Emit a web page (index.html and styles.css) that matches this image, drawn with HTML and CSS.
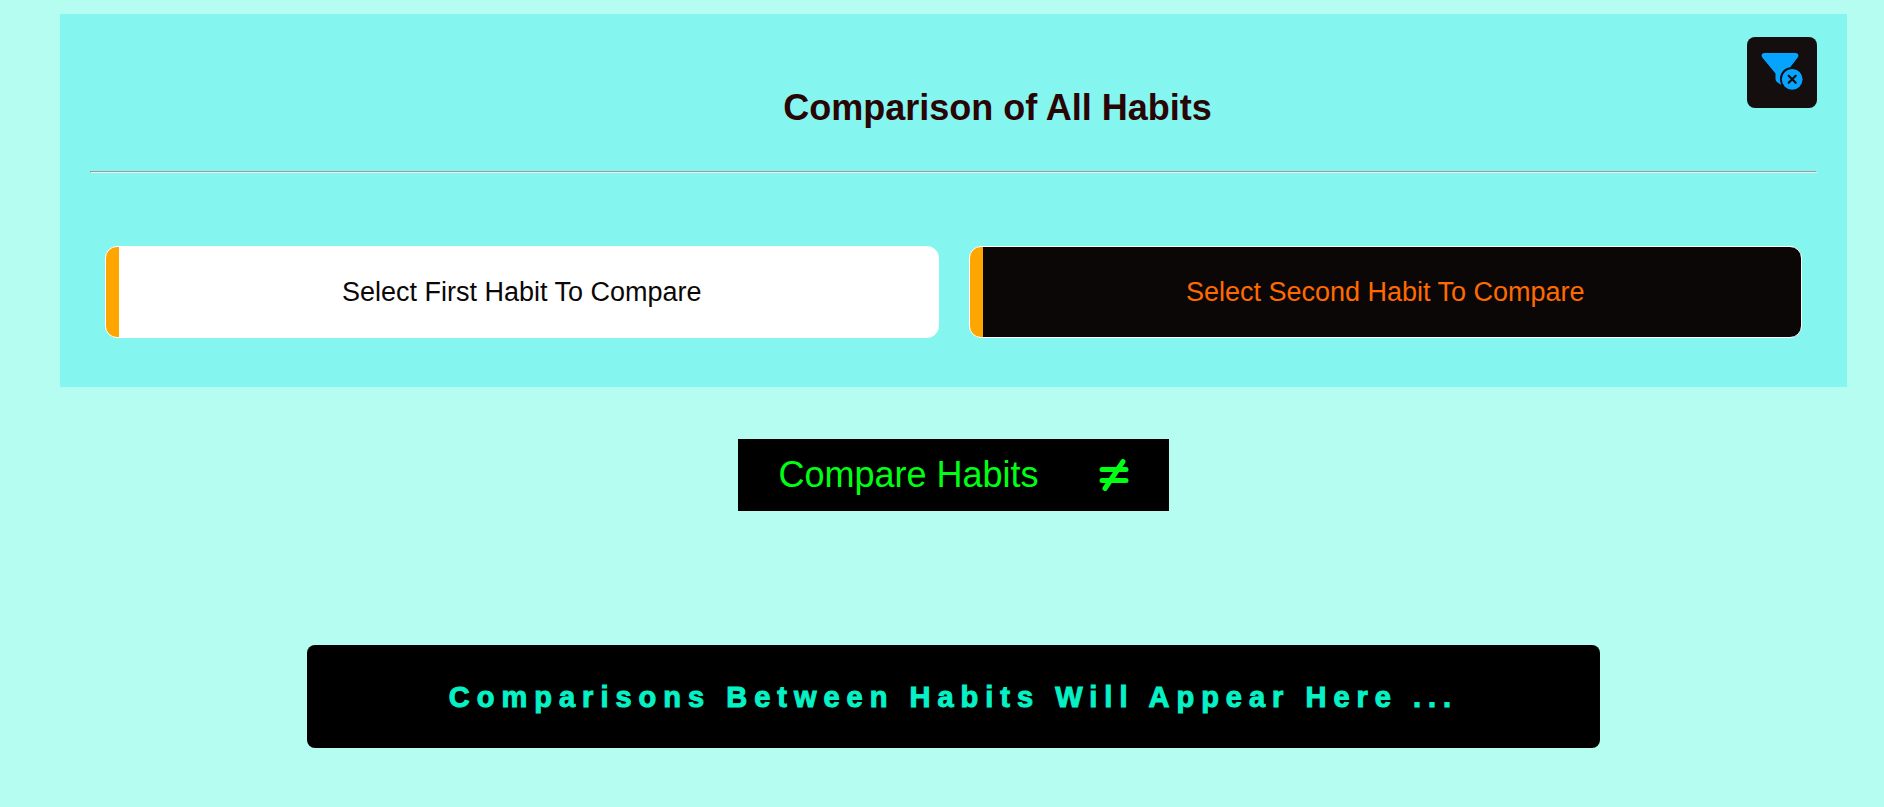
FILE: index.html
```html
<!DOCTYPE html>
<html lang="en">
<head>
<meta charset="utf-8">
<meta name="viewport" content="width=device-width, initial-scale=1">
<title>Comparison of All Habits</title>
<link rel="stylesheet" href="styles.css">
</head>
<body>
<main class="page">
  <section class="panel">
    <header class="panel-header">
      <h1 class="panel-title">Comparison of All Habits</h1>
      <button class="clear-filter" type="button" aria-label="Clear filters">
        <svg class="clear-icon" viewBox="0 0 42 38" aria-hidden="true">
          <path fill="#06a4ff" d="M3.500 1H34.500C37.300 1 38.200 3.600 36.700 5.600L29.200 15.200C23.500 16 19 20.500 19 27Q19 30.300 20.300 33L16.200 30.200Q14.500 28.900 14.500 26.800V21.500L1.300 5.600C-.200 3.600 .700 1 3.500 1Z"/>
          <circle cx="31.200" cy="27.300" r="10.400" fill="#06a4ff"/>
          <path fill="none" stroke="#140e0e" stroke-width="2.200" stroke-linecap="round" d="M27.700 23.800L34.700 30.800M34.700 23.800L27.700 30.800"/>
        </svg>
      </button>
    </header>
    <hr class="divider">
    <div class="selectors">
      <select class="habit-select" aria-label="First habit">
        <option>Select First Habit To Compare</option>
      </select>
      <select class="habit-select habit-select-dark" aria-label="Second habit">
        <option>Select Second Habit To Compare</option>
      </select>
    </div>
  </section>
  <button class="compare" type="button">
    <span>Compare Habits</span>
    <svg class="compare-icon" viewBox="0 0 30 32" aria-hidden="true">
      <path fill="none" stroke="#00ff14" stroke-width="5" stroke-linecap="round" d="M3 10.500H27M3 21.500H27M6 29.500L24 2.500"/>
    </svg>
  </button>
  <p class="result">Comparisons Between Habits Will Appear Here ...</p>
</main>
</body>
</html>
```
FILE: styles.css
```css
* { box-sizing: border-box; }
body {
  margin: 0;
  background: #b6fdf1;
  font-family: "Liberation Sans", Arial, sans-serif;
}
.page {
  display: flex;
  flex-direction: column;
  align-items: center;
  padding: 14px 37px 40px 60px;
}
.panel {
  align-self: stretch;
  padding: 23px 30px 49px;
  background: #85f6ef;
}
.panel-header {
  display: flex;
  align-items: flex-start;
  padding-left: 158px;
}
.panel-title {
  flex: 1;
  margin: 50px 0 43px;
  color: #2a0505;
  font-size: 36px;
  line-height: 41px;
  text-align: center;
}
.clear-filter {
  display: flex;
  justify-content: center;
  padding: 15px 0 0;
  width: 70px;
  height: 71px;
  border: 0;
  border-radius: 8px;
  background: #140e0e;
}
.clear-icon { width: 42px; height: 38px; }
.divider {
  margin: 0;
  border: 1px inset #eee;
}
.selectors {
  display: grid;
  grid-template-columns: 1fr 1fr;
  gap: 30px;
  padding: 73px 15px 0;
}
.habit-select {
  appearance: none;
  height: 92px;
  padding: 0 13px;
  border: 1px solid #fff;
  border-radius: 12px;
  background: linear-gradient(to right, #ffa500 13px, #fff 13px);
  color: #0c0707;
  font-family: inherit;
  font-size: 27px;
  text-align: center;
  text-align-last: center;
}
.habit-select-dark {
  background: linear-gradient(to right, #ffa500 13px, #0c0707 13px);
  color: #ff6a00;
}
.compare {
  display: flex;
  align-items: center;
  gap: 60px;
  height: 72px;
  margin-top: 52px;
  padding: 0 40px;
  border: 0;
  background: #000;
  color: #00ff14;
  font-family: inherit;
  font-size: 36px;
}
.compare-icon { width: 30px; height: 32px; }
.result {
  width: 72.4%;
  margin: 134px 0 0;
  padding: 31px 30px 29px;
  border-radius: 8px;
  background: #000;
  color: #06f1c5;
  font-size: 29px;
  font-weight: 900;
  line-height: 43px;
  letter-spacing: 7px;
  text-align: center;
  -webkit-text-stroke: 1px #06f1c5;
}
```
